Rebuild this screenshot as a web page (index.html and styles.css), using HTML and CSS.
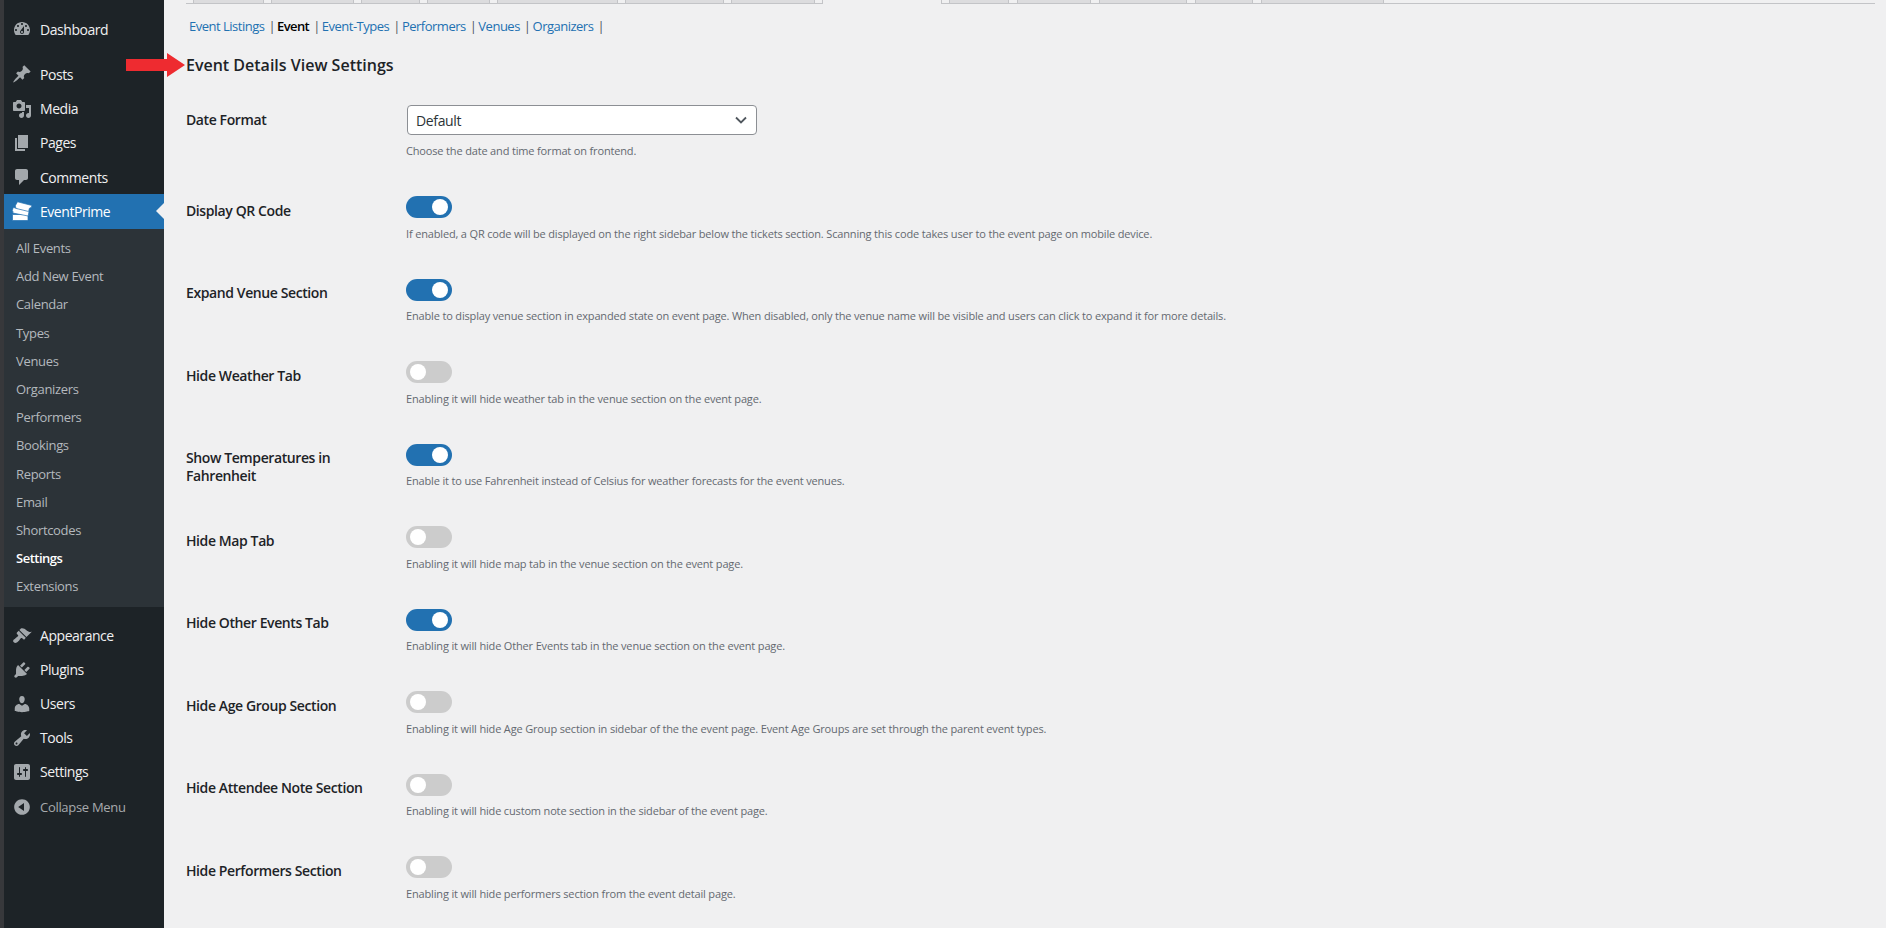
FILE: index.html
```html
<!DOCTYPE html>
<html lang="en">
<head>
<meta charset="utf-8">
<title>Event Details View Settings</title>
<link rel="stylesheet" href="styles.css">
</head>
<body>
<div class="shell">
  <div class="gutter"></div>
  <nav class="sidebar">
    <ul class="menu first">
      <li class="item"><svg class="ico" viewBox="0 0 20 20"><path d="M3.76 16h12.48c1.1-1.37 1.76-3.11 1.76-5 0-4.42-3.58-8-8-8s-8 3.58-8 8c0 1.89.66 3.63 1.76 5zM10 4c.55 0 1 .45 1 1s-.45 1-1 1-1-.45-1-1 .45-1 1-1zM6 6c.55 0 1 .45 1 1s-.45 1-1 1-1-.45-1-1 .45-1 1-1zm8 0c.55 0 1 .45 1 1s-.45 1-1 1-1-.45-1-1 .45-1 1-1zm-5.37 5.55L12 7v6c0 1.1-.9 2-2 2s-2-.9-2-2c0-.57.24-1.08.63-1.45zM4 10c.55 0 1 .45 1 1s-.45 1-1 1-1-.45-1-1 .45-1 1-1zm12 0c.55 0 1 .45 1 1s-.45 1-1 1-1-.45-1-1 .45-1 1-1zm-5 3c0-.55-.45-1-1-1s-1 .45-1 1 .45 1 1 1 1-.45 1-1z"/></svg><span>Dashboard</span></li>
    </ul>
    <ul class="menu second">
      <li class="item"><svg class="ico" viewBox="0 0 20 20"><path d="M10.44 3.02l1.82-1.82 6.36 6.35-1.83 1.82c-1.05-.68-2.48-.57-3.41.36l-.75.75c-.92.93-1.04 2.35-.35 3.41l-1.83 1.82-2.41-2.41-2.8 2.79c-.42.42-3.38 2.71-3.8 2.29s1.86-3.39 2.28-3.81l2.79-2.79L4.1 9.36l1.83-1.82c1.05.69 2.48.57 3.4-.36l.75-.75c.93-.92 1.05-2.35.36-3.41z"/></svg><span>Posts</span></li>
      <li class="item"><svg class="ico" viewBox="0 0 20 20"><path d="M13 11V4c0-.55-.45-1-1-1h-1.67L9 1H5L3.67 3H2c-.55 0-1 .45-1 1v7c0 .55.45 1 1 1h10c.55 0 1-.45 1-1zM7 4.5c1.38 0 2.5 1.12 2.5 2.5S8.38 9.5 7 9.5 4.5 8.38 4.5 7 5.62 4.5 7 4.5zM14 6h5v10.5c0 1.38-1.12 2.5-2.5 2.5S14 17.88 14 16.5s1.12-2.5 2.5-2.5c.17 0 .34.02.5.05V9h-3V6zm-4 8.05V13h2v3.5c0 1.38-1.12 2.5-2.5 2.5S7 17.88 7 16.5 8.12 14 9.5 14c.17 0 .34.02.5.05z"/></svg><span>Media</span></li>
      <li class="item"><svg class="ico" viewBox="0 0 20 20"><path d="M6 15V2h10v13H6zm-1 1h8v2H3V5h2v11z"/></svg><span>Pages</span></li>
      <li class="item"><svg class="ico" viewBox="0 0 20 20"><path d="M5 2h9c1.1 0 2 .9 2 2v7c0 1.1-.9 2-2 2h-2l-5 5v-5H5c-1.1 0-2-.9-2-2V4c0-1.1.9-2 2-2z"/></svg><span>Comments</span></li>
      <li class="item current">
        <svg class="ico logo" viewBox="0 0 20 20"><path d="M.5 13.500h15.500v6H.5z"/><path d="M1.200 6.500l16 3-1 5.500-15.500-3c.5-1 .3-1.800-.4-2.300z"/><path d="M5.500.8l14.500 3.700-.9 2.200c-1-.2-1.500.1-1.800 1l-.7 2.800-13-3.200c.4-1 .3-1.700-.5-2.200z"/></svg>
        <span>EventPrime</span>
        <i class="pointer"></i>
      </li>
    </ul>
    <ul class="submenu">
      <li>All Events</li>
      <li>Add New Event</li>
      <li>Calendar</li>
      <li>Types</li>
      <li>Venues</li>
      <li>Organizers</li>
      <li>Performers</li>
      <li>Bookings</li>
      <li>Reports</li>
      <li>Email</li>
      <li>Shortcodes</li>
      <li class="active">Settings</li>
      <li>Extensions</li>
    </ul>
    <ul class="menu third">
      <li class="item"><svg class="ico" viewBox="0 0 20 20"><path d="M14.48 11.06L7.41 3.99l1.5-1.5c.5-.56 2.3-.47 3.51.32 1.21.8 1.43 1.28 2.91 2.1 1.18.64 2.45 1.26 4.45.85zm-.71.71L6.7 4.7 4.930 6.470c-.39.39-.39 1.020 0 1.410l1.060 1.060c.39.39.39 1.030 0 1.420-.6.6-1.430 1.110-2.210 1.690-.35.26-.7.53-1.010.84C1.430 13.230.4 14.960 1.800 16.350c1.400 1.400 3.120.37 4.480-.98.3-.3.58-.65.84-.99.58-.78 1.090-1.610 1.690-2.210.39-.39 1.020-.39 1.410 0l1.060 1.060c.39.39 1.020.39 1.410 0z"/></svg><span>Appearance</span></li>
      <li class="item"><svg class="ico" viewBox="0 0 20 20"><path d="M13.110 4.360L9.870 7.600 8 5.730l3.240-3.240c.35-.34 1.050-.2 1.560.32.52.51.66 1.210.31 1.550zm-8 1.770l.91-1.120 9.010 9.010-1.190.84c-.71.71-2.630 1.160-3.820 1.160H6.140L4.900 17.260c-.59.59-1.540.59-2.120 0-.59-.58-.59-1.530 0-2.120l1.240-1.240v-3.880c0-1.130.4-3.190 1.090-3.890zm7.260 3.970l3.240-3.240c.34-.35 1.040-.21 1.550.31.52.51.66 1.210.31 1.550l-3.240 3.250z"/></svg><span>Plugins</span></li>
      <li class="item"><svg class="ico" viewBox="0 0 20 20"><path d="M10 9.250c-2.270 0-2.730-3.440-2.730-3.440C7 4.020 7.820 2 9.970 2c2.160 0 2.980 2.020 2.710 3.810 0 0-.41 3.440-2.680 3.440zm0 2.570L12.720 10c2.390 0 4.520 2.330 4.520 4.530v2.490s-3.650 1.130-7.240 1.130c-3.650 0-7.240-1.130-7.240-1.130v-2.490c0-2.250 1.940-4.480 4.470-4.480z"/></svg><span>Users</span></li>
      <li class="item"><svg class="ico" viewBox="0 0 20 20"><path d="M16.680 9.770c-1.340 1.340-3.300 1.670-4.950.99l-5.410 6.520c-.99.99-2.590.99-3.580 0s-.99-2.590 0-3.570l6.520-5.420c-.68-1.650-.35-3.610.99-4.950 1.280-1.280 3.120-1.620 4.720-1.060l-2.890 2.890 2.820 2.820 2.860-2.870c.53 1.580.18 3.390-1.080 4.650zM3.810 16.210c.4.39 1.040.39 1.430 0 .4-.4.4-1.040 0-1.430-.39-.4-1.030-.4-1.430 0-.39.39-.39 1.030 0 1.430z"/></svg><span>Tools</span></li>
      <li class="item"><svg class="ico" viewBox="0 0 20 20"><path d="M18 16V4c0-1.100-.9-2-2-2H4c-1.100 0-2 .9-2 2v12c0 1.100.9 2 2 2h12c1.100 0 2-.9 2-2zM8 11h1c.55 0 1 .45 1 1s-.45 1-1 1H8v1.500c0 .28-.22.5-.5.5s-.5-.22-.5-.5V13H6c-.55 0-1-.45-1-1s.45-1 1-1h1V5.500c0-.28.22-.5.5-.5s.5.22.5.5V11zm5-2h-1c-.55 0-1-.45-1-1s.45-1 1-1h1V5.500c0-.28.22-.5.5-.5s.5.22.5.5V7h1c.55 0 1 .45 1 1s-.45 1-1 1h-1v5.500c0 .28-.22.5-.5.5s-.5-.22-.5-.5V9z"/></svg><span>Settings</span></li>
      <li class="item collapse"><svg class="ico" viewBox="0 0 20 20"><path d="M10 2.160c4.330 0 7.840 3.510 7.840 7.840s-3.510 7.840-7.840 7.840S2.160 14.330 2.160 10 5.710 2.160 10 2.160zm2 11.720V6.120L6.180 9.970z"/></svg><span>Collapse Menu</span></li>
    </ul>
  </nav>

  <main class="content">
    <div class="tabs">
      <i class="tab t1"></i><i class="tab t2"></i><i class="tab t3"></i><i class="tab t4"></i><i class="tab t5"></i><i class="tab t6"></i><i class="tab t7"></i>
      <i class="tab-active"></i>
      <i class="tab t8"></i><i class="tab t9"></i><i class="tab t10"></i><i class="tab t11"></i><i class="tab t12"></i>
    </div>

    <ul class="sublinks">
      <li><a href="#">Event Listings</a><b class="sep">|</b></li>
      <li><a href="#" class="now">Event</a><b class="sep">|</b></li>
      <li><a href="#">Event-Types</a><b class="sep">|</b></li>
      <li><a href="#">Performers</a><b class="sep">|</b></li>
      <li><a href="#">Venues</a><b class="sep">|</b></li>
      <li><a href="#">Organizers</a><b class="sep">|</b></li>
    </ul>

    <h2 class="title">Event Details View Settings</h2>
    <svg class="arrow" viewBox="0 0 59 24"><path d="M0 6h41V0l18 12-18 12v-6H0z"/></svg>

    <div class="form">
      <section class="row row-date">
        <label class="label">Date Format</label>
        <div class="field">
          <div class="select"><span>Default</span><svg class="chev" viewBox="0 0 12 8"><path d="M1 1.500l5 5 5-5"/></svg></div>
          <p class="desc desc-select">Choose the date and time format on frontend.</p>
        </div>
      </section>
      <section class="row">
        <label class="label">Display QR Code</label>
        <div class="field"><span class="toggle on"></span>
          <p class="desc">If enabled, a QR code will be displayed on the right sidebar below the tickets section. Scanning this code takes user to the event page on mobile device.</p></div>
      </section>
      <section class="row">
        <label class="label">Expand Venue Section</label>
        <div class="field"><span class="toggle on"></span>
          <p class="desc">Enable to display venue section in expanded state on event page. When disabled, only the venue name will be visible and users can click to expand it for more details.</p></div>
      </section>
      <section class="row">
        <label class="label">Hide Weather Tab</label>
        <div class="field"><span class="toggle"></span>
          <p class="desc">Enabling it will hide weather tab in the venue section on the event page.</p></div>
      </section>
      <section class="row">
        <label class="label">Show Temperatures in Fahrenheit</label>
        <div class="field"><span class="toggle on"></span>
          <p class="desc">Enable it to use Fahrenheit instead of Celsius for weather forecasts for the event venues.</p></div>
      </section>
      <section class="row">
        <label class="label">Hide Map Tab</label>
        <div class="field"><span class="toggle"></span>
          <p class="desc">Enabling it will hide map tab in the venue section on the event page.</p></div>
      </section>
      <section class="row">
        <label class="label">Hide Other Events Tab</label>
        <div class="field"><span class="toggle on"></span>
          <p class="desc">Enabling it will hide Other Events tab in the venue section on the event page.</p></div>
      </section>
      <section class="row">
        <label class="label">Hide Age Group Section</label>
        <div class="field"><span class="toggle"></span>
          <p class="desc">Enabling it will hide Age Group section in sidebar of the the event page. Event Age Groups are set through the parent event types.</p></div>
      </section>
      <section class="row">
        <label class="label">Hide Attendee Note Section</label>
        <div class="field"><span class="toggle"></span>
          <p class="desc">Enabling it will hide custom note section in the sidebar of the event page.</p></div>
      </section>
      <section class="row">
        <label class="label">Hide Performers Section</label>
        <div class="field"><span class="toggle"></span>
          <p class="desc">Enabling it will hide performers section from the event detail page.</p></div>
      </section>
    </div>
  </main>
</div>
</body>
</html>
```
FILE: styles.css
```css
* { box-sizing: border-box; }
html, body { margin: 0; height: 100%; overflow: hidden; }
body { background: #f0f0f1; font-family: "Open Sans", "Noto Sans", sans-serif; color: #1d2327; }
ul { list-style: none; margin: 0; padding: 0; }
p, h2 { margin: 0; }

.shell { display: flex; height: 928px; overflow: hidden; position: relative; }
.gutter { width: 4px; background: #37383b; flex: none; }

.sidebar { width: 160px; flex: none; background: #1d2327; color: #f0f0f1; }
.menu.first { padding-top: 12px; }
.menu.second { margin-top: 11px; }
.menu.third { margin-top: 12px; }
.item { display: flex; align-items: center; height: 34.25px; position: relative; font-size: 14px; letter-spacing: -.45px; }
.third .item { height: 34px; }
.item span { margin-left: 36px; }
.ico { position: absolute; left: 8px; top: 7px; width: 20px; height: 20px; fill: #a3a8ac; }
.item.current { background: #2271b1; color: #fff; }
.item.current .ico { fill: #fff; }
.logo path { stroke: #2271b1; stroke-width: .7; }
.item.collapse { color: #a7aaad; font-size: 13px; letter-spacing: -.3px; margin-top: 1px; }
.pointer { position: absolute; right: 0; top: 9px; border: 8px solid transparent; border-left: 0; border-right-color: #f0f0f1; }

.submenu { background: #2c3338; padding: 5.5px 0 6.500px; }
.submenu li { height: 28.2px; line-height: 28px; padding-left: 12px; font-size: 13px; letter-spacing: -.33px; color: #b4b9be; }
.submenu li.active { color: #fff; font-weight: 600; letter-spacing: -.5px; }

.content { flex: 1; padding-left: 22px; padding-right: 11px; position: relative; min-width: 0; }

.tabs { display: flex; align-items: flex-start; height: 4px; border-bottom: 1px solid #c3c4c7; }
.tab { display: block; flex: none; height: 3px; background: #dcdcde; border: 1px solid #c3c4c7; border-top: 0; border-bottom: 0; margin-left: 7px; }
.tab-active { display: block; flex: none; width: 120px; height: 4px; margin-left: 7px; background: #f0f0f1; border-right: 1px solid #c3c4c7; border-left: 1px solid #c3c4c7; }
.t1 { width: 71px; }
.t2 { width: 83px; }
.t3 { width: 59px; }
.t4 { width: 63px; }
.t5 { width: 121px; }
.t6 { width: 99px; }
.t7 { width: 84px; }
.t8 { width: 60px; }
.t9 { width: 74px; margin-left: 8px; }
.t10 { width: 88px; margin-left: 8px; }
.t11 { width: 58px; margin-left: 8px; }
.t12 { width: 123px; margin-left: 8px; }

.sublinks { display: flex; margin-top: 13px; padding-left: 3px; font-size: 13px; line-height: 18px; letter-spacing: -.5px; }
.sublinks li { display: flex; }
.sublinks a { color: #2271b1; text-decoration: none; }
.sublinks a.now { color: #000; font-weight: 600; letter-spacing: -.6px; }
.sublinks .sep { font-weight: 400; color: #50575e; margin: 0 1.5px 0 4px; letter-spacing: 0; }

.title { margin-top: 18px; font-size: 16px; line-height: 24px; font-weight: 600; color: #1d2327; letter-spacing: 0; }
.arrow { position: absolute; left: -38px; top: 53px; width: 59px; height: 24px; fill: #ee2b30; }

.form { margin-top: 28px; }
.row { display: flex; height: 82.5px; }
.row-date { height: 91px; }
.label { width: 220px; flex: none; padding: 5.5px 30px 0 0; font-size: 14px; line-height: 18px; font-weight: 600; letter-spacing: -.4px; color: #1d2327; }
.field { flex: 1; min-width: 0; }
.select { width: 350px; height: 30px; margin-left: 1px; padding: 0 9px 0 8px; display: flex; align-items: center; justify-content: space-between; background: #fff; border: 1px solid #8c8f94; border-radius: 4px; font-size: 14px; letter-spacing: -.35px; color: #2c3338; }
.chev { width: 12px; height: 8px; fill: none; stroke: #50575e; stroke-width: 1.800; }
.desc { margin-top: 7.500px; font-size: 11px; line-height: 16px; color: #646970; letter-spacing: -.16px; }
.toggle { display: block; position: relative; width: 46px; height: 22px; border-radius: 11px; background: #ccc; }
.toggle::after { content: ""; position: absolute; top: 3px; left: 4px; width: 16px; height: 16px; border-radius: 50%; background: #fff; }
.toggle.on { background: #2271b1; }
.toggle.on::after { left: 26px; }
```
